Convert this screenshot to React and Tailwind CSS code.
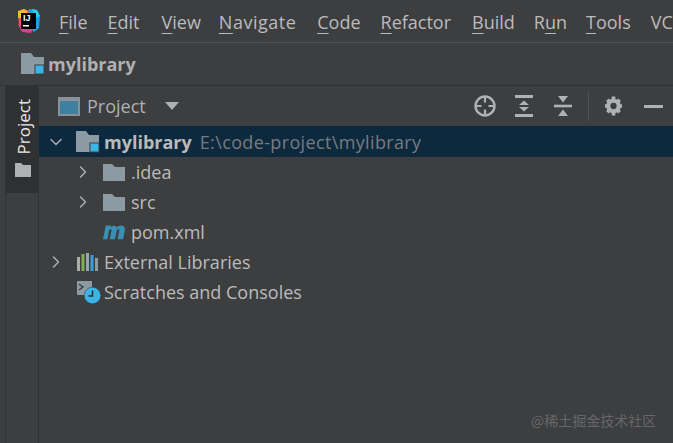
import { ChevronRight, ChevronDown } from "lucide-react";

const font = { fontFamily: '"Open Sans", "Noto Sans", sans-serif' };

const menu = [
  ["F", "ile", "mr-[20px]"],
  ["E", "dit", "mr-[22px]"],
  ["V", "iew", "mr-[18px]"],
  ["N", "avigate", "mr-[21px] tracking-[0.5px]"],
  ["C", "ode", "mr-[20px]"],
  ["R", "efactor", "mr-[21px]"],
  ["B", "uild", "mr-[19px]"],
  ["R", "un", "mr-[19px]", true],
  ["T", "ools", "mr-[20px]"],
];

function Folder({ className = "" }) {
  return (
    <svg viewBox="0 0 22 18" className={className}>
      <path d="M0 1h9l3 3h10v14H0z" fill="#8b9aa3" />
    </svg>
  );
}

function ModuleFolder({ className = "" }) {
  return (
    <svg viewBox="0 0 24 22" className={className}>
      <path d="M0 0h10l3 4h10v12H14v5H0z" fill="#8b9aa3" />
      <rect x="14" y="12" width="9" height="9" fill="#3bb4e8" stroke="#3c3f41" strokeWidth="1" />
    </svg>
  );
}

function Logo() {
  return (
    <svg viewBox="0 0 24 26" className="w-[24px] h-[26px]">
      <path d="M1 4l6-3 7 2-2 12-10 4z" fill="#f0525f" />
      <path d="M1 3l6-2 4 3-6 6-4 0z" fill="#f5b82e" />
      <path d="M12 1l8 1 3 6-1 12-5 4-6-6z" fill="#1b9fe0" />
      <path d="M15 1l5 1 3 6-4 2z" fill="#21d0e8" />
      <path d="M1 16l8 2 7 3-2 4-9-1z" fill="#e8388e" />
      <rect x="4" y="5" width="15" height="16" fill="#000" />
      <text x="6" y="13" fontSize="9" fontWeight="700" fill="#fff" fontFamily="Liberation Sans, sans-serif">IJ</text>
      <rect x="6" y="17" width="6" height="1.5" fill="#fff" />
    </svg>
  );
}

function Locate() {
  return (
    <svg viewBox="0 0 22 22" className="w-[22px] h-[22px]">
      <circle cx="11" cy="11" r="9.500" fill="none" stroke="#afb1b3" strokeWidth="2.400" />
      <path d="M11 2v5.500M11 14.500V20M2 11h5.500M14.500 11H20" stroke="#afb1b3" strokeWidth="2.200" />
    </svg>
  );
}

function ExpandAll() {
  return (
    <svg viewBox="0 0 18 22" className="w-[18px] h-[22px]">
      <path d="M0 1.500h18M0 20.500h18" stroke="#afb1b3" strokeWidth="3" />
      <path d="M9 5.500l5 4.500H4zM9 16.500l5-4.500H4z" fill="#afb1b3" />
    </svg>
  );
}

function CollapseAll() {
  return (
    <svg viewBox="0 0 18 22" className="w-[18px] h-[22px]">
      <path d="M0 11h18" stroke="#afb1b3" strokeWidth="2.600" />
      <path d="M4 1h10l-5 6.500zM4 21h10l-5-6.500z" fill="#afb1b3" />
    </svg>
  );
}

function Gear() {
  return (
    <svg viewBox="0 0 20 20" className="w-[19px] h-[20px]">
      <circle cx="10" cy="10" r="5.500" fill="none" stroke="#afb1b3" strokeWidth="4.400" />
      <path d="M10 0v4M10 16v4M1 10h3M16 10h3M3.500 3.500l3 3M13.500 13.500l3 3M16.500 3.500l-3 3M6.500 13.500l-3 3" stroke="#afb1b3" strokeWidth="3.800" />
    </svg>
  );
}

function Maven() {
  return (
    <svg viewBox="0 0 24 16" className="w-[22px] h-[16px]">
      <path d="M0 16L3 1h6l-.4 2C10.500 .5 14 .5 15 3c2-2.500 8.500-3.500 9 2l-2 11h-6l1.800-10c.2-1.500-2-1.300-2.800.5L13 16H7.500l1.800-10c.2-1.500-2-1.300-2.800.5L4.800 16z" fill="#3a90b4" />
    </svg>
  );
}

function Libraries() {
  return (
    <svg viewBox="0 0 21 18" className="w-[21px] h-[18px]">
      <rect x="0" y="4" width="3" height="14" fill="#a9b0a8" />
      <rect x="4.500" y="1" width="3" height="17" fill="#7fb04a" />
      <rect x="9" y="0" width="3" height="18" fill="#9aa7b0" />
      <rect x="13.500" y="2" width="3" height="16" fill="#389fd6" />
      <rect x="18" y="5" width="3" height="13" fill="#8b9aa3" />
    </svg>
  );
}

function Scratches() {
  return (
    <svg viewBox="0 0 24 23" className="w-[24px] h-[23px]">
      <rect x="0" y="0" width="15" height="14" fill="#8b9aa3" />
      <path d="M2 3l4 3-4 3" stroke="#3d3e40" strokeWidth="1.400" fill="none" />
      <circle cx="15.500" cy="14.500" r="8.300" fill="#3bb4e8" stroke="#3d3e40" strokeWidth=".6" />
      <path d="M15.500 9.500v5.500h-4" stroke="#2b2d2f" strokeWidth="1.500" fill="none" />
    </svg>
  );
}

function Row({ indent, arrow, icon, selected, children }) {
  return (
    <div className={`flex items-center ${indent} ${selected ? "h-[31px] pt-[1px] bg-[#0d293e]" : "h-[30px]"}`}>
      <div className="w-[37px] shrink-0 flex items-center pl-[7px]">
        {arrow === "right" && <ChevronRight size={20} strokeWidth={1.7} className="text-[#afb1b3]" />}
        {arrow === "down" && <ChevronDown size={20} strokeWidth={1.7} className="text-[#afb1b3]" />}
      </div>
      <div className="w-[28px] shrink-0 flex items-center">{icon}</div>
      {children}
    </div>
  );
}

export default function App() {
  return (
    <div className="relative w-[673px] h-[443px] overflow-hidden bg-[#3d3e40] flex flex-col text-[#bbbbbb]" style={font}>
      {/* menu */}
      <div className="h-[43px] shrink-0 flex items-center pl-[17px] border-b border-[#515151] whitespace-nowrap">
        <div className="mr-[18px]"><Logo /></div>
        <div className="flex text-[18px] pt-[2px]">
          {menu.map(([first, rest, gap, second]) => (
            <span key={first + rest} className={gap}>
              {second ? (
                <>{first}<u className="underline-offset-4">{rest[0]}</u>{rest.slice(1)}</>
              ) : (
                <><u className="underline-offset-4">{first}</u>{rest}</>
              )}
            </span>
          ))}
          <span>VCS</span>
        </div>
      </div>

      {/* breadcrumb */}
      <div className="h-[43px] shrink-0 flex items-center pl-[21px] border-b border-[#323232]">
        <ModuleFolder className="w-[24px] h-[22px] mr-[3px]" />
        <span className="text-[18px] font-bold text-[#afb1b3]">mylibrary</span>
      </div>

      <div className="flex flex-1 min-h-0">
        {/* tool strip */}
        <div className="w-[39px] shrink-0 flex border-r border-[#323232]">
          <div className="w-[6px] border-r border-[#323232]" />
          <div className="w-[32px] h-[107px] bg-[#2f3031] flex flex-col items-center">
            <span className="text-[17px] text-[#e8e8e8] mt-[13px] ml-[4px] [writing-mode:vertical-rl] rotate-180 leading-[20px]">Project</span>
            <svg viewBox="0 0 16 14" className="w-[16px] h-[14px] mt-[9px] ml-[2px]">
              <path d="M0 0h6l2 2h8v12H0z" fill="#afb1b3" />
            </svg>
          </div>
        </div>

        {/* project panel */}
        <div className="flex-1 min-w-0 flex flex-col">
          <div className="h-[40px] shrink-0 flex items-center pl-[19px] pr-[10px]">
            <svg viewBox="0 0 22 19" className="w-[22px] h-[19px] mr-[7px]">
              <rect x="1" y="1" width="20" height="17" fill="#3f7f9f" stroke="#8a9299" strokeWidth="2" />
              <rect x="1" y="1" width="20" height="3" fill="#8a9299" />
            </svg>
            <span className="text-[18px] text-[#afb1b3]">Project</span>
            <svg viewBox="0 0 14 8" className="w-[14px] h-[8px] ml-[19px]">
              <path d="M0 0h14l-7 8z" fill="#afb1b3" />
            </svg>
            <div className="ml-auto flex items-center">
              <Locate />
              <div className="w-[19px]" />
              <ExpandAll />
              <div className="w-[21px]" />
              <CollapseAll />
              <div className="w-[16px]" />
              <div className="w-px h-[30px] bg-[#515151]" />
              <div className="w-[15px]" />
              <Gear />
              <div className="w-[21px]" />
              <div className="w-[19px] h-[3px] bg-[#afb1b3]" />
            </div>
          </div>

          <div className="flex flex-col text-[18px]">
            <Row arrow="down" indent="pl-0" selected icon={<ModuleFolder className="w-[24px] h-[22px]" />}>
              <span className="font-bold text-[#bbbbbb] mr-[8px]">mylibrary</span>
              <span className="text-[#777b80] tracking-[0.36px]">E:\code-project\mylibrary</span>
            </Row>
            <Row arrow="right" indent="pl-[27px]" icon={<Folder className="w-[22px] h-[18px]" />}>.idea</Row>
            <Row arrow="right" indent="pl-[27px]" icon={<Folder className="w-[22px] h-[18px]" />}>src</Row>
            <Row indent="pl-[27px]" icon={<Maven />}>pom.xml</Row>
            <Row arrow="right" indent="pl-0" icon={<div className="ml-[1px]"><Libraries /></div>}>External Libraries</Row>
            <Row indent="pl-0" icon={<div className="ml-[1px]"><Scratches /></div>}>Scratches and Consoles</Row>
          </div>
        </div>
      </div>

      <span className="absolute left-[531px] top-[410px] text-[14px] text-[#65676a]" style={{ fontFamily: '"Noto Sans CJK SC", sans-serif' }}>@稀土掘金技术社区</span>
    </div>
  );
}
